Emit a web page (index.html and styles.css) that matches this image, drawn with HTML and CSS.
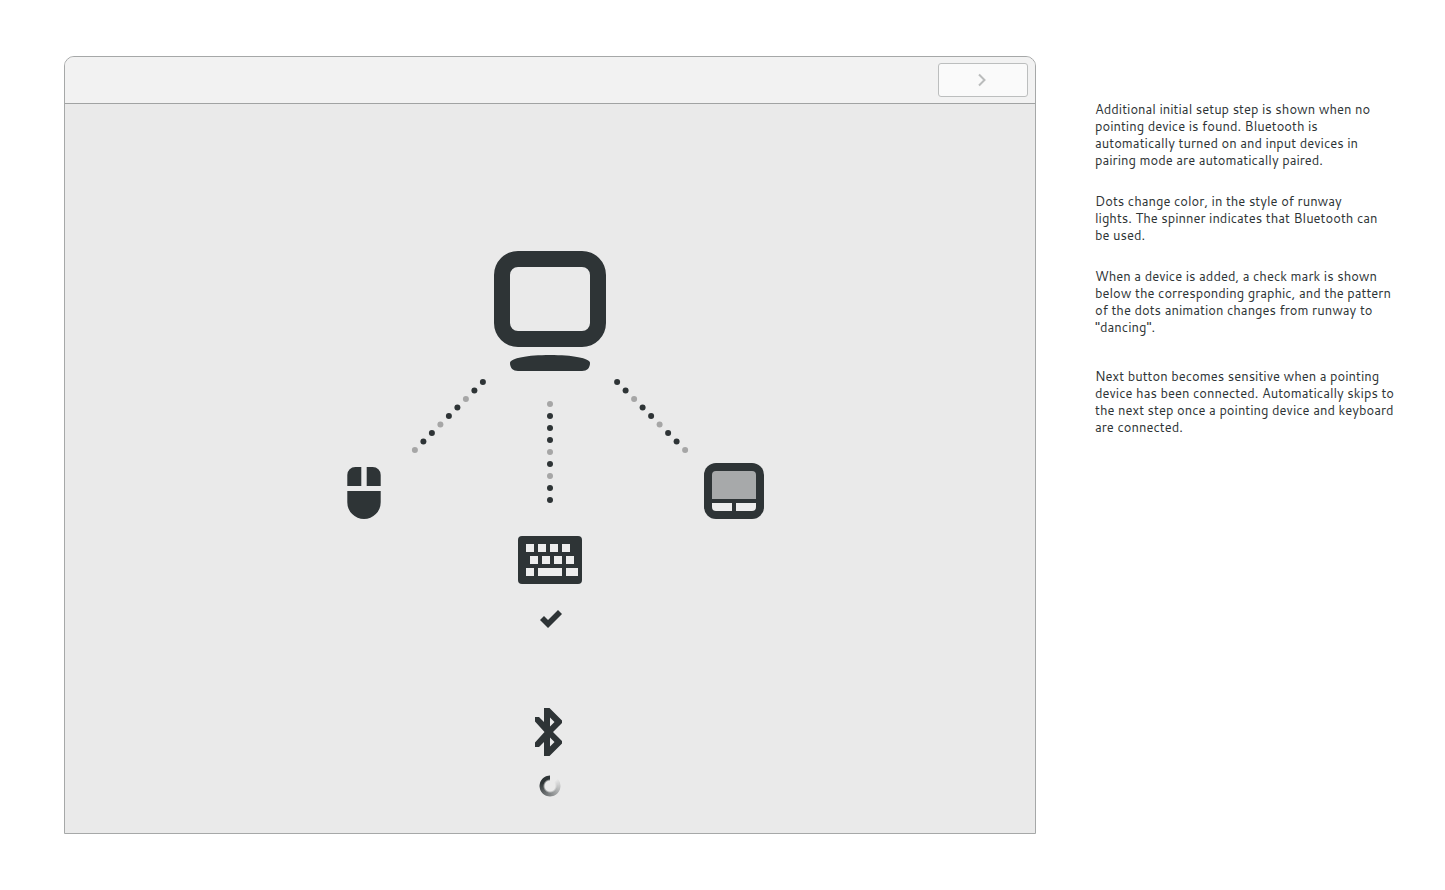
FILE: index.html
```html
<!DOCTYPE html>
<html lang="en">
<head>
<meta charset="utf-8">
<title>Initial setup: input devices</title>
<link rel="stylesheet" href="styles.css">
</head>
<body>
<div class="page">
  <main class="window">
    <header class="headerbar">
      <button class="next" type="button" aria-label="Next" disabled>
        <svg width="12" height="14" viewBox="0 0 12 14" aria-hidden="true"><path d="M2 1.500L7.500 7L2 12.500" fill="none" stroke="currentColor" stroke-width="2"/></svg>
      </button>
    </header>
    <section class="content">
      <svg class="diagram" width="440" height="380" viewBox="330 250 440 380" role="img" aria-label="Computer connecting to a mouse, a keyboard and a touchpad">
        <g class="ink">
          <path fill-rule="evenodd" d="M518 251H582A24 24 0 0 1 606 275V323A24 24 0 0 1 582 347H518A24 24 0 0 1 494 323V275A24 24 0 0 1 518 251ZM518 267A8 8 0 0 0 510 275V323A8 8 0 0 0 518 331H582A8 8 0 0 0 590 323V275A8 8 0 0 0 582 267Z"/>
          <path d="M510 363C510 358 528 355 550 355S590 358 590 363C590 368 587 371 582 371H518C513 371 510 368 510 363Z"/>
          <path d="M347.300 486V475A8 8 0 0 1 355.300 467H361.300V486ZM366.700 486V467H372.700A8 8 0 0 1 380.700 475V486ZM347.300 491H380.700V502.300A16.700 16.700 0 0 1 347.300 502.300Z"/>
          <rect x="704" y="463" width="60" height="56" rx="12"/>
          <rect x="518" y="536" width="64" height="48" rx="4"/>
          <path d="M540 620L544 616L548 620L558 610L562 614L548 628Z"/>
        </g>
        <path class="pad" d="M712 499V475A4 4 0 0 1 716 471H752A4 4 0 0 1 756 475V499Z"/>
        <path class="key" d="M712 503H732V511H716A4 4 0 0 1 712 507ZM736 503H756V507A4 4 0 0 1 752 511H736Z"/>
        <path class="key" d="M526 544h8v8h-8zM538 544h8v8h-8zM550 544h8v8h-8zM562 544h8v8h-8zM530 556h8v8h-8zM542 556h8v8h-8zM554 556h8v8h-8zM566 556h8v8h-8zM526 568h8v8h-8zM538 568h24v8h-24zM566 568h12v8h-12z"/>
        <g class="ink">
          <circle cx="482.900" cy="382.100" r="3"/><circle cx="474.400" cy="390.600" r="3"/><circle class="dim" cx="465.900" cy="399.100" r="3"/><circle cx="457.400" cy="407.600" r="3"/><circle cx="448.900" cy="416.100" r="3"/><circle class="dim" cx="440.400" cy="424.600" r="3"/><circle cx="431.900" cy="433.100" r="3"/><circle cx="423.400" cy="441.600" r="3"/><circle class="dim" cx="414.900" cy="450.100" r="3"/>
          <circle cx="617.100" cy="382.100" r="3"/><circle cx="625.600" cy="390.600" r="3"/><circle class="dim" cx="634.100" cy="399.100" r="3"/><circle cx="642.600" cy="407.600" r="3"/><circle cx="651.100" cy="416.100" r="3"/><circle class="dim" cx="659.600" cy="424.600" r="3"/><circle cx="668.100" cy="433.100" r="3"/><circle cx="676.600" cy="441.600" r="3"/><circle class="dim" cx="685.100" cy="450.100" r="3"/>
          <circle class="dim" cx="550" cy="404" r="3"/><circle cx="550" cy="416" r="3"/><circle cx="550" cy="428" r="3"/><circle cx="550" cy="440" r="3"/><circle class="dim" cx="550" cy="452" r="3"/><circle cx="550" cy="464" r="3"/><circle class="dim" cx="550" cy="476" r="3"/><circle cx="550" cy="488" r="3"/><circle cx="550" cy="500" r="3"/>
        </g>
      </svg>
      <div class="status">
        <svg class="ink" width="32" height="48" viewBox="534 708 32 48" role="img" aria-label="Bluetooth"><path fill-rule="evenodd" d="M544 708H549.500L562 720.500V723L553 732L562 741V743.500L549.500 756H544V742L539 747H535V742.500L544.500 732L535 721.500V717H539L544 722ZM550 717.500V726.500L554.500 722ZM550 737.500V746.500L554.500 742Z"/></svg>
        <div class="spinner" role="status" aria-label="Searching for devices"></div>
      </div>
    </section>
  </main>
  <aside class="notes">
    <p>Additional initial setup step is shown when no<br>pointing device is found. Bluetooth is<br>automatically turned on and input devices in<br>pairing mode are automatically paired.</p>
    <p>Dots change color, in the style of runway<br>lights. The spinner indicates that Bluetooth can<br>be used.</p>
    <p>When a device is added, a check mark is shown<br>below the corresponding graphic, and the pattern<br>of the dots animation changes from runway to<br>"dancing".</p>
    <p class="later">Next button becomes sensitive when a pointing<br>device has been connected. Automatically skips to<br>the next step once a pointing device and keyboard<br>are connected.</p>
  </aside>
</div>
</body>
</html>
```
FILE: styles.css
```css
* {
  box-sizing: border-box;
}

body {
  margin: 0;
  background: #fff;
  color: #2e3436;
  font: 13px/17px Cantarell, "Noto Sans", sans-serif;
}

.page {
  display: flex;
  gap: 59px;
  min-height: 100vh;
  padding: 56px 40px 56px 64px;
}

.window {
  flex: 1;
  display: flex;
  flex-direction: column;
  border: 1px solid #a6a8a8;
  border-radius: 10px 10px 0 0;
  background: #eaeaea;
  overflow: hidden;
}

.headerbar {
  display: flex;
  justify-content: flex-end;
  padding: 6px 7px;
  border-bottom: 1px solid #a1a3a3;
  background: #f2f2f2;
}

.next {
  display: flex;
  align-items: center;
  justify-content: center;
  width: 90px;
  height: 34px;
  padding: 0;
  border: 1px solid #bcbebe;
  border-radius: 3px;
  background: #fafafa;
  color: #babcbc;
}

.content {
  flex: 1;
  display: flex;
  flex-direction: column;
  align-items: center;
  gap: 78px;
  padding: 146px 24px 36px;
}

.ink {
  fill: #2e3436;
}

.dim {
  fill: #a6a6a6;
}

.pad {
  fill: #a7a9aa;
}

.key {
  fill: #ededed;
}

.status {
  display: flex;
  flex-direction: column;
  align-items: center;
  gap: 19px;
}

.spinner {
  width: 22px;
  height: 22px;
  border-radius: 50%;
  background: conic-gradient(transparent 0 45deg, #2e3436 290deg);
  mask: radial-gradient(circle, transparent 5px, #000 7px 10px, transparent 11px);
}

.notes {
  flex: 0 0 310px;
  padding-top: 45px;
  white-space: nowrap;
}

.notes p {
  margin: 0 0 24px;
}

.notes .later {
  margin-top: 32px;
}
```
